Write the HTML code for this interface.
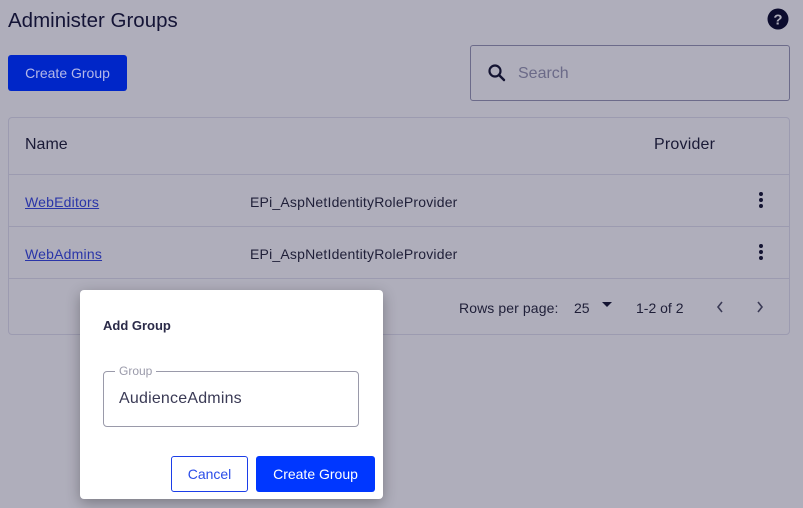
<!DOCTYPE html>
<html><head><style>
*{box-sizing:border-box;margin:0;padding:0}
body{width:803px;height:508px;overflow:hidden;background:#afaebb;font-family:"Liberation Sans",sans-serif;color:#1a1a3a;position:relative}
.a{position:absolute;white-space:nowrap}
.link{color:#2a35a8;text-decoration:underline;font-size:14px}
.cell{font-size:14px;color:#1f1f38}
.hr{position:absolute;left:9px;width:781px;height:1px;background:#9c9bb0}
.dots{position:absolute;width:4px}
.dots i{display:block;width:4px;height:4px;border-radius:50%;background:#141432;margin-bottom:2px}
</style></head><body>
<div class="a" style="left:8px;top:9px;font-size:20.5px;color:#141436">Administer Groups</div>
<svg class="a" style="left:767px;top:8px" width="22" height="22" viewBox="0 0 22 22"><circle cx="11" cy="11" r="10.5" fill="#0c0c2e"/><text x="11" y="16.5" font-size="15" font-weight="bold" fill="#afaebb" text-anchor="middle" font-family="Liberation Sans">?</text></svg>
<div class="a" style="left:8px;top:55px;width:119px;height:36px;background:#0026c8;border-radius:3px;color:#b4b8e8;font-size:14px;line-height:36px;text-align:center">Create Group</div>
<div class="a" style="left:470px;top:45px;width:320px;height:56px;border:1px solid #6c6b8a;border-radius:3px"></div>
<svg class="a" style="left:487px;top:63px" width="20" height="20" viewBox="0 0 20 20"><circle cx="8" cy="8" r="5.5" fill="none" stroke="#141432" stroke-width="2.2"/><path d="M12 12l5 5" stroke="#141432" stroke-width="2.4" stroke-linecap="round"/></svg>
<div class="a" style="left:518px;top:65px;font-size:16px;color:#6b6a88">Search</div>
<div class="a" style="left:8px;top:117px;width:782px;height:218px;border:1px solid #9c9bb0;border-radius:4px"></div>
<div class="a" style="left:25px;top:136px;font-size:16px;color:#1a1a36">Name</div>
<div class="a" style="left:654px;top:136px;font-size:16px;color:#1a1a36;letter-spacing:0.2px">Provider</div>
<div class="hr" style="top:174px"></div>
<div class="a link" style="left:25px;top:194px;letter-spacing:0.2px">WebEditors</div>
<div class="a cell" style="left:250px;top:194px;letter-spacing:0.2px">EPi_AspNetIdentityRoleProvider</div>
<div class="dots" style="left:759px;top:192px"><i></i><i></i><i></i></div>
<div class="hr" style="top:226px"></div>
<div class="a link" style="left:25px;top:246px;letter-spacing:0.2px">WebAdmins</div>
<div class="a cell" style="left:250px;top:246px;letter-spacing:0.2px">EPi_AspNetIdentityRoleProvider</div>
<div class="dots" style="left:759px;top:244px"><i></i><i></i><i></i></div>
<div class="hr" style="top:278px"></div>
<div class="a cell" style="left:459px;top:300px;letter-spacing:0.1px">Rows per page:</div>
<div class="a cell" style="left:574px;top:300px">25</div>
<svg class="a" style="left:602px;top:302px" width="10" height="6"><path d="M0 0h10L5 5z" fill="#141432"/></svg>
<div class="a cell" style="left:636px;top:300px">1-2 of 2</div>
<svg class="a" style="left:716px;top:301px" width="8" height="12"><path d="M6 1L2 6l4 5" fill="none" stroke="#3a3a55" stroke-width="1.6"/></svg>
<svg class="a" style="left:756px;top:301px" width="8" height="12"><path d="M2 1l4 5-4 5" fill="none" stroke="#3a3a55" stroke-width="1.6"/></svg>
<div class="a" style="left:80px;top:290px;width:303px;height:209px;background:#fff;border-radius:4px;box-shadow:0 4px 14px rgba(0,0,0,.3)"></div>
<div class="a" style="left:103px;top:318px;font-size:13px;font-weight:bold;color:#2a2a48">Add Group</div>
<div class="a" style="left:103px;top:371px;width:256px;height:56px;border:1px solid #9a9aaa;border-radius:4px"></div>
<div class="a" style="left:115px;top:364px;background:#fff;padding:0 4px;font-size:12px;color:#9a9aaa">Group</div>
<div class="a" style="left:119px;top:390px;font-size:16px;color:#3a3a55;letter-spacing:0.2px">AudienceAdmins</div>
<div class="a" style="left:171px;top:456px;width:77px;height:36px;border:1px solid #1c3ee8;border-radius:3px;color:#2b4de8;font-size:14px;line-height:34px;text-align:center">Cancel</div>
<div class="a" style="left:256px;top:456px;width:119px;height:36px;background:#0037ff;border-radius:3px;color:#fff;font-size:14px;line-height:36px;text-align:center">Create Group</div>
</body></html>
